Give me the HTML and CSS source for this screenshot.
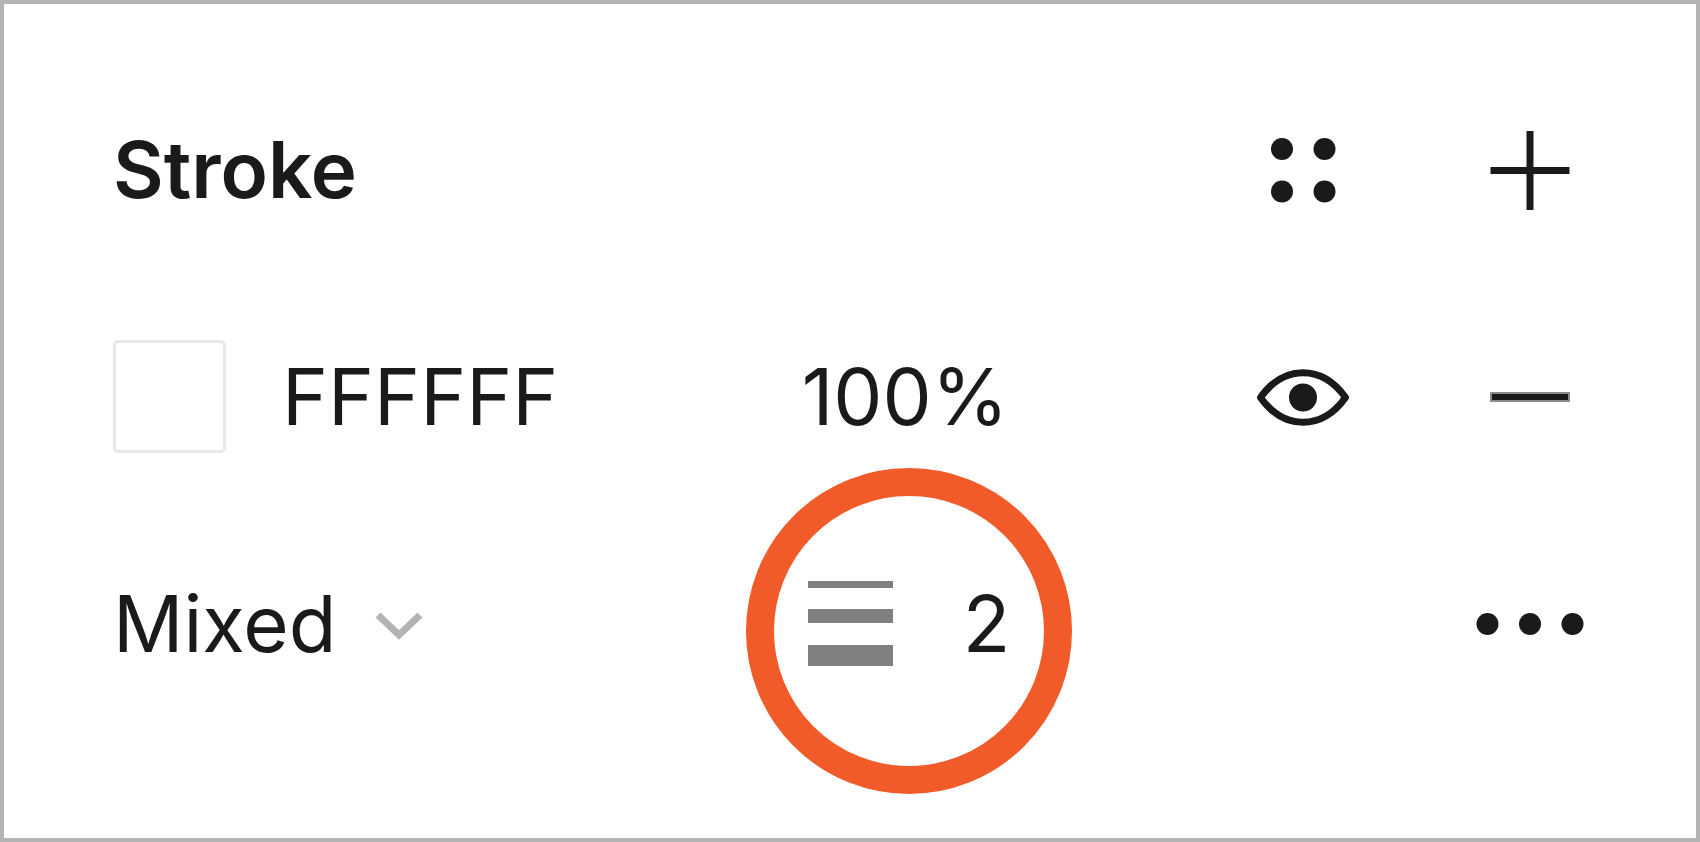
FILE: index.html
```html
<!DOCTYPE html>
<html lang="en">
<head>
<meta charset="utf-8">
<meta name="viewport" content="width=device-width, initial-scale=1">
<title>Stroke</title>
<link rel="stylesheet" href="styles.css">
</head>
<body>
<main class="panel">
  <header class="row">
    <h1 class="title">Stroke</h1>
    <button class="icon-button styles-button" type="button" aria-label="Stroke styles">
      <svg class="icon" viewBox="0 0 114 114" aria-hidden="true"><g fill="currentColor"><circle cx="36" cy="36" r="11"/><circle cx="78.5" cy="36" r="11"/><circle cx="36" cy="78.5" r="11"/><circle cx="78.5" cy="78.5" r="11"/></g></svg>
    </button>
    <button class="icon-button" type="button" aria-label="Add stroke">
      <svg class="icon" viewBox="0 0 114 114" aria-hidden="true"><path d="M57 18v79M17.5 57.500h79" fill="none" stroke="currentColor" stroke-width="7"/></svg>
    </button>
  </header>

  <div class="row">
    <div class="paint">
      <button class="swatch" type="button" aria-label="Stroke color"></button>
      <input class="field" type="text" value="FFFFFF" aria-label="Hex color">
    </div>
    <input class="field" type="text" value="100%" aria-label="Opacity">
    <button class="icon-button" type="button" aria-label="Hide stroke">
      <svg class="icon" viewBox="0 0 114 114" aria-hidden="true"><path d="M14.5 57.500C38 24.500 76 24.500 99.500 57.500C76 90.500 38 90.500 14.500 57.500Z" fill="none" stroke="currentColor" stroke-width="7" stroke-linejoin="round"/><circle cx="57" cy="57.500" r="14" fill="currentColor"/></svg>
    </button>
    <button class="icon-button" type="button" aria-label="Remove stroke">
      <svg class="icon" viewBox="0 0 114 114" aria-hidden="true"><path d="M17 52h80v10h-80z" fill="#8c8c8c"/><path d="M19 54h76v6h-76z" fill="currentColor"/></svg>
    </button>
  </div>

  <div class="row">
    <div class="align">
      <select class="select" id="align" aria-label="Stroke alignment">
        <option>Mixed</option>
      </select>
      <svg class="chevron" viewBox="0 0 52 32" aria-hidden="true"><path d="M5 5L26 25L47 5" fill="none" stroke="currentColor" stroke-width="7"/></svg>
    </div>
    <div class="weight">
      <svg class="weight-icon" viewBox="0 0 85 85" aria-hidden="true"><path d="M0 0h85v7H0zM0 28h85v14H0zM0 64h85v21H0z" fill="currentColor"/></svg>
      <input class="field" type="text" value="2" aria-label="Stroke weight">
      <span class="highlight" aria-hidden="true"></span>
    </div>
    <button class="icon-button more-button" type="button" aria-label="Advanced stroke">
      <svg class="icon" viewBox="0 0 114 114" aria-hidden="true"><g fill="currentColor"><circle cx="14.5" cy="57" r="11"/><circle cx="57" cy="57" r="11"/><circle cx="99.5" cy="57" r="11"/></g></svg>
    </button>
  </div>
</main>
</body>
</html>
```
FILE: styles.css
```css
* {
  box-sizing: border-box;
}

body {
  margin: 0;
  background: #fff;
}

.panel {
  min-height: 100vh;
  padding: 52px 53px 52px 109px;
  border: 4px solid #b3b3b3;
  background: #fff;
  color: #1a1a1a;
  font-family: Inter, sans-serif;
  font-size: 78px;
  font-weight: 400;
  line-height: 96px;
}

.row {
  display: grid;
  grid-template-columns: 16fr 9fr 227px 227px;
  align-items: center;
  height: 227px;
}

.title {
  margin: 0;
  font-size: 78px;
  font-weight: 600;
}

.styles-button {
  grid-column: 3;
}

.more-button {
  grid-column: 4;
}

.icon-button {
  display: grid;
  place-items: center;
  height: 227px;
  padding: 0;
  border: 0;
  background: none;
  color: inherit;
}

.icon {
  width: 114px;
  height: 114px;
}

.paint,
.align,
.weight {
  display: flex;
  align-items: center;
  min-width: 0;
}

.paint {
  gap: 56px;
}

.swatch {
  flex: none;
  width: 113px;
  height: 113px;
  padding: 0;
  border: 3px solid #e8e8e8;
  border-radius: 5px;
  background: #fff;
}

.field,
.select {
  min-width: 0;
  padding: 0;
  border: 0;
  background: none;
  color: inherit;
  font: inherit;
}

.field {
  width: 100%;
}

.select {
  appearance: none;
}

.align {
  gap: 36px;
}

.chevron {
  width: 52px;
  height: 32px;
  margin-top: 4px;
  color: #b3b3b3;
}

.weight {
  position: relative;
  gap: 70px;
  padding-left: 6px;
}

.weight-icon {
  flex: none;
  width: 85px;
  height: 85px;
  color: #808080;
}

.highlight {
  position: absolute;
  top: 50%;
  left: -56px;
  width: 326px;
  height: 326px;
  margin-top: -156px;
  border: 28px solid #f15a29;
  border-radius: 50%;
  pointer-events: none;
}
```
